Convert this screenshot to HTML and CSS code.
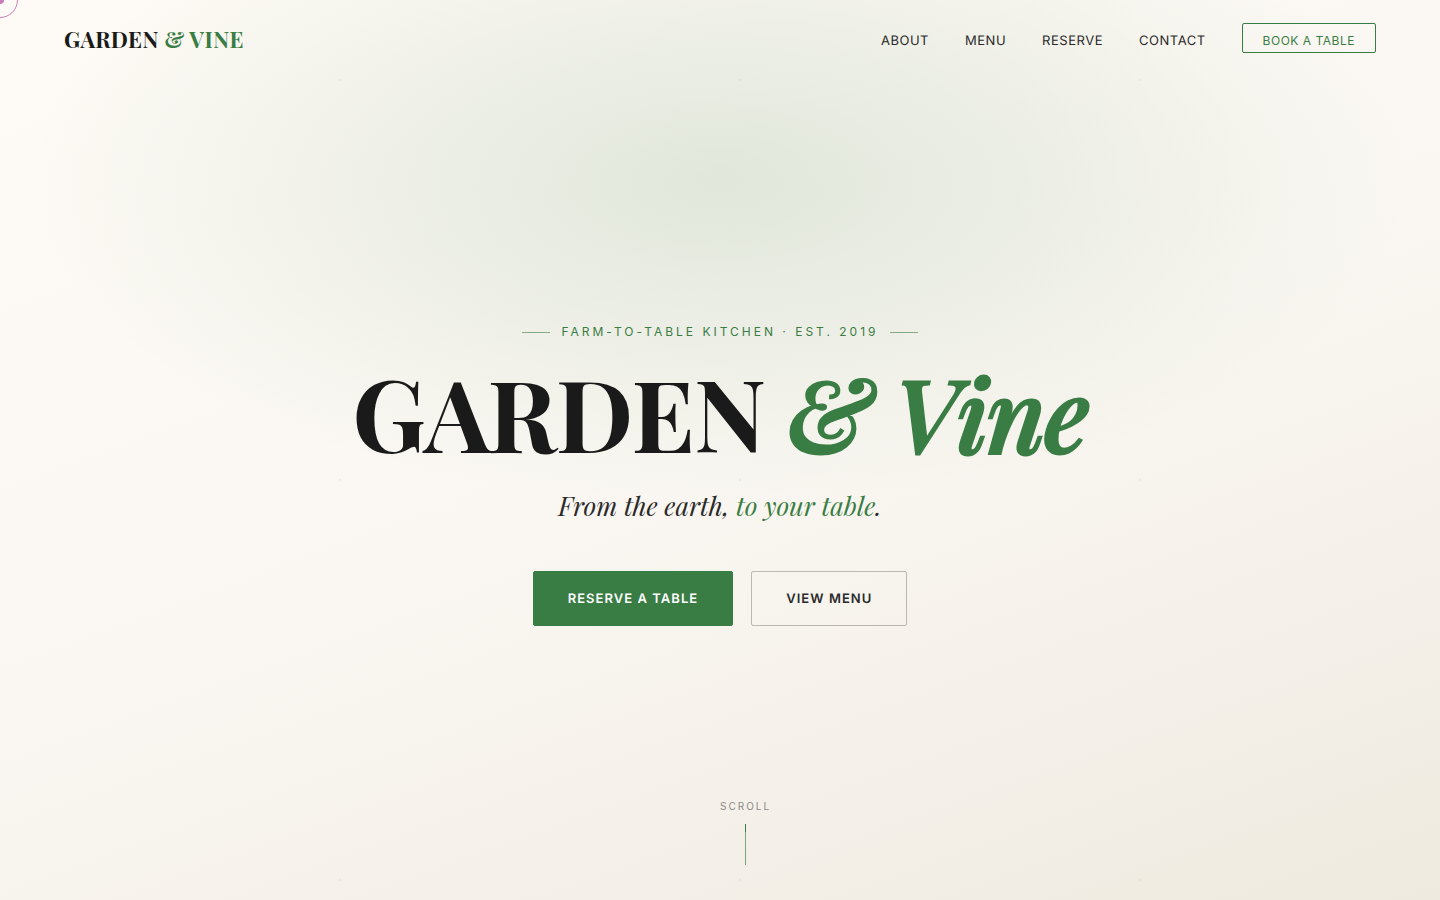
FILE: index.html
```html
<!DOCTYPE html>
<html lang="en">

<head>
  <meta charset="utf-8" />
  <meta name="viewport" content="width=device-width, initial-scale=1" />
  <title>Garden &amp; Vine</title>
  <link rel="stylesheet" href="styles.css">
</head>

<body>
  <div class="cursor-ring"></div>
  <div class="cursor-dot"></div>

  <header class="topbar">
    <a class="logo" href="#home">GARDEN <span>&amp; VINE</span></a>
    <nav class="nav">
      <a href="#about">About</a>
      <a href="#menu">Menu</a>
      <a href="#reserve">Reserve</a>
      <a href="#contact">Contact</a>
      <a class="nav-book" href="#reserve">Book a table</a>
    </nav>
  </header>

  <main class="hero" id="home">
    <p class="eyebrow">Farm-to-table kitchen · Est. 2019</p>
    <h1>GARDEN <em>&amp; Vine</em></h1>
    <p class="tagline">From the earth, <span>to your table</span>.</p>
    <div class="actions">
      <a class="btn btn-primary" href="#reserve">Reserve a table</a>
      <a class="btn btn-outline" href="#menu">View menu</a>
    </div>
  </main>

  <div class="scroll-hint">
    <span>Scroll</span>
    <div class="scroll-line"></div>
  </div>
</body>

</html>
```
FILE: styles.css
```css
* {
  box-sizing: border-box;
  margin: 0;
  padding: 0;
}

body {
  min-height: 100vh;
  display: flex;
  flex-direction: column;
  position: relative;
  overflow-x: hidden;
  color: #2a2a2a;
  font-family: Inter, "Liberation Sans", sans-serif;
  background:
    radial-gradient(1px 1px at 20% 30%, rgba(58, 125, 68, 0.05), transparent) 0 0 / 400px 400px,
    radial-gradient(1px 1px at 40% 80%, rgba(58, 125, 68, 0.05), transparent) 0 0 / 400px 400px,
    radial-gradient(1px 1px at 70% 60%, rgba(58, 125, 68, 0.05), transparent) 0 0 / 400px 400px,
    radial-gradient(2px 2px at 85% 20%, rgba(58, 125, 68, 0.1), transparent) 0 0 / 400px 400px,
    radial-gradient(ellipse 80% 60% at 50% 20%, rgba(58, 125, 68, 0.14), transparent 60%),
    linear-gradient(160deg, #fefaf5 0%, #faf7f2 50%, #f4efe8 78%, #eeeadf 100%);
}

a {
  color: inherit;
  text-decoration: none;
}

.cursor-ring,
.cursor-dot {
  position: absolute;
  top: 0;
  left: 0;
  border-radius: 50%;
  transform: translate(-50%, -50%);
  pointer-events: none;
}

.cursor-ring {
  width: 36px;
  height: 36px;
  border: 1px solid #c77db5;
}

.cursor-dot {
  width: 8px;
  height: 8px;
  background: #c77db5;
}

.topbar {
  height: 76px;
  padding: 0 64px;
  display: flex;
  align-items: center;
  justify-content: space-between;
}

.logo {
  padding-top: 2px;
  font-family: "Playfair Display", "Liberation Serif", serif;
  font-size: 22px;
  font-weight: 700;
  letter-spacing: 0.02em;
  color: #1a1a1a;
}

.logo span {
  color: #3a7d44;
}

.nav {
  display: flex;
  align-items: baseline;
  gap: 36px;
  font-size: 13px;
  letter-spacing: 0.04em;
  text-transform: uppercase;
  text-rendering: geometricPrecision;
}

.nav-book {
  padding: 10px 20px 4px;
  border: 1px solid #3a7d44;
  border-radius: 2px;
  color: #3a7d44;
  font-size: 12px;
  line-height: 14px;
  text-rendering: auto;
}

.hero {
  flex: 1;
  display: flex;
  flex-direction: column;
  align-items: center;
  justify-content: center;
  text-align: center;
  padding: 0 24px 28px;
}

.eyebrow {
  display: flex;
  align-items: center;
  gap: 11px;
  color: #3a7d44;
  font-size: 12px;
  line-height: 20px;
  letter-spacing: 3px;
  text-transform: uppercase;
}

.eyebrow::before,
.eyebrow::after {
  content: "";
  width: 28px;
  height: 1px;
  background: #3a7d44;
  opacity: 0.6;
}

h1 {
  margin-top: 20px;
  font-family: "Playfair Display", "Liberation Serif", serif;
  font-size: 100px;
  font-weight: 700;
  line-height: 100px;
  letter-spacing: -1px;
  color: #1a1a1a;
}

h1 em {
  color: #3a7d44;
  font-weight: 500;
  -webkit-text-stroke: 3px #3a7d44;
}

.tagline {
  margin-top: 24px;
  font-family: "Playfair Display", "Liberation Serif", serif;
  font-size: 26px;
  font-style: italic;
  line-height: 40px;
}

.tagline span {
  color: #3a7d44;
}

.actions {
  display: flex;
  gap: 18px;
  margin-top: 45px;
}

.btn {
  padding: 18px 34px 17px;
  border: 1px solid #bbb8b4;
  border-radius: 2px;
  font-size: 13px;
  font-weight: 600;
  line-height: 18px;
  letter-spacing: 0.08em;
  text-transform: uppercase;
  text-rendering: geometricPrecision;
}

.btn-primary {
  background: #3a7d44;
  border-color: #3a7d44;
  color: #fff;
}

.scroll-hint {
  position: absolute;
  left: 50%;
  bottom: 35px;
  display: flex;
  flex-direction: column;
  align-items: center;
  gap: 12px;
  color: #8a8a88;
  font-size: 10px;
  letter-spacing: 2px;
  text-transform: uppercase;
}

.scroll-line {
  width: 1px;
  height: 41px;
  background: linear-gradient(#3a7d44 20%, #74a77b 20%);
}
```
